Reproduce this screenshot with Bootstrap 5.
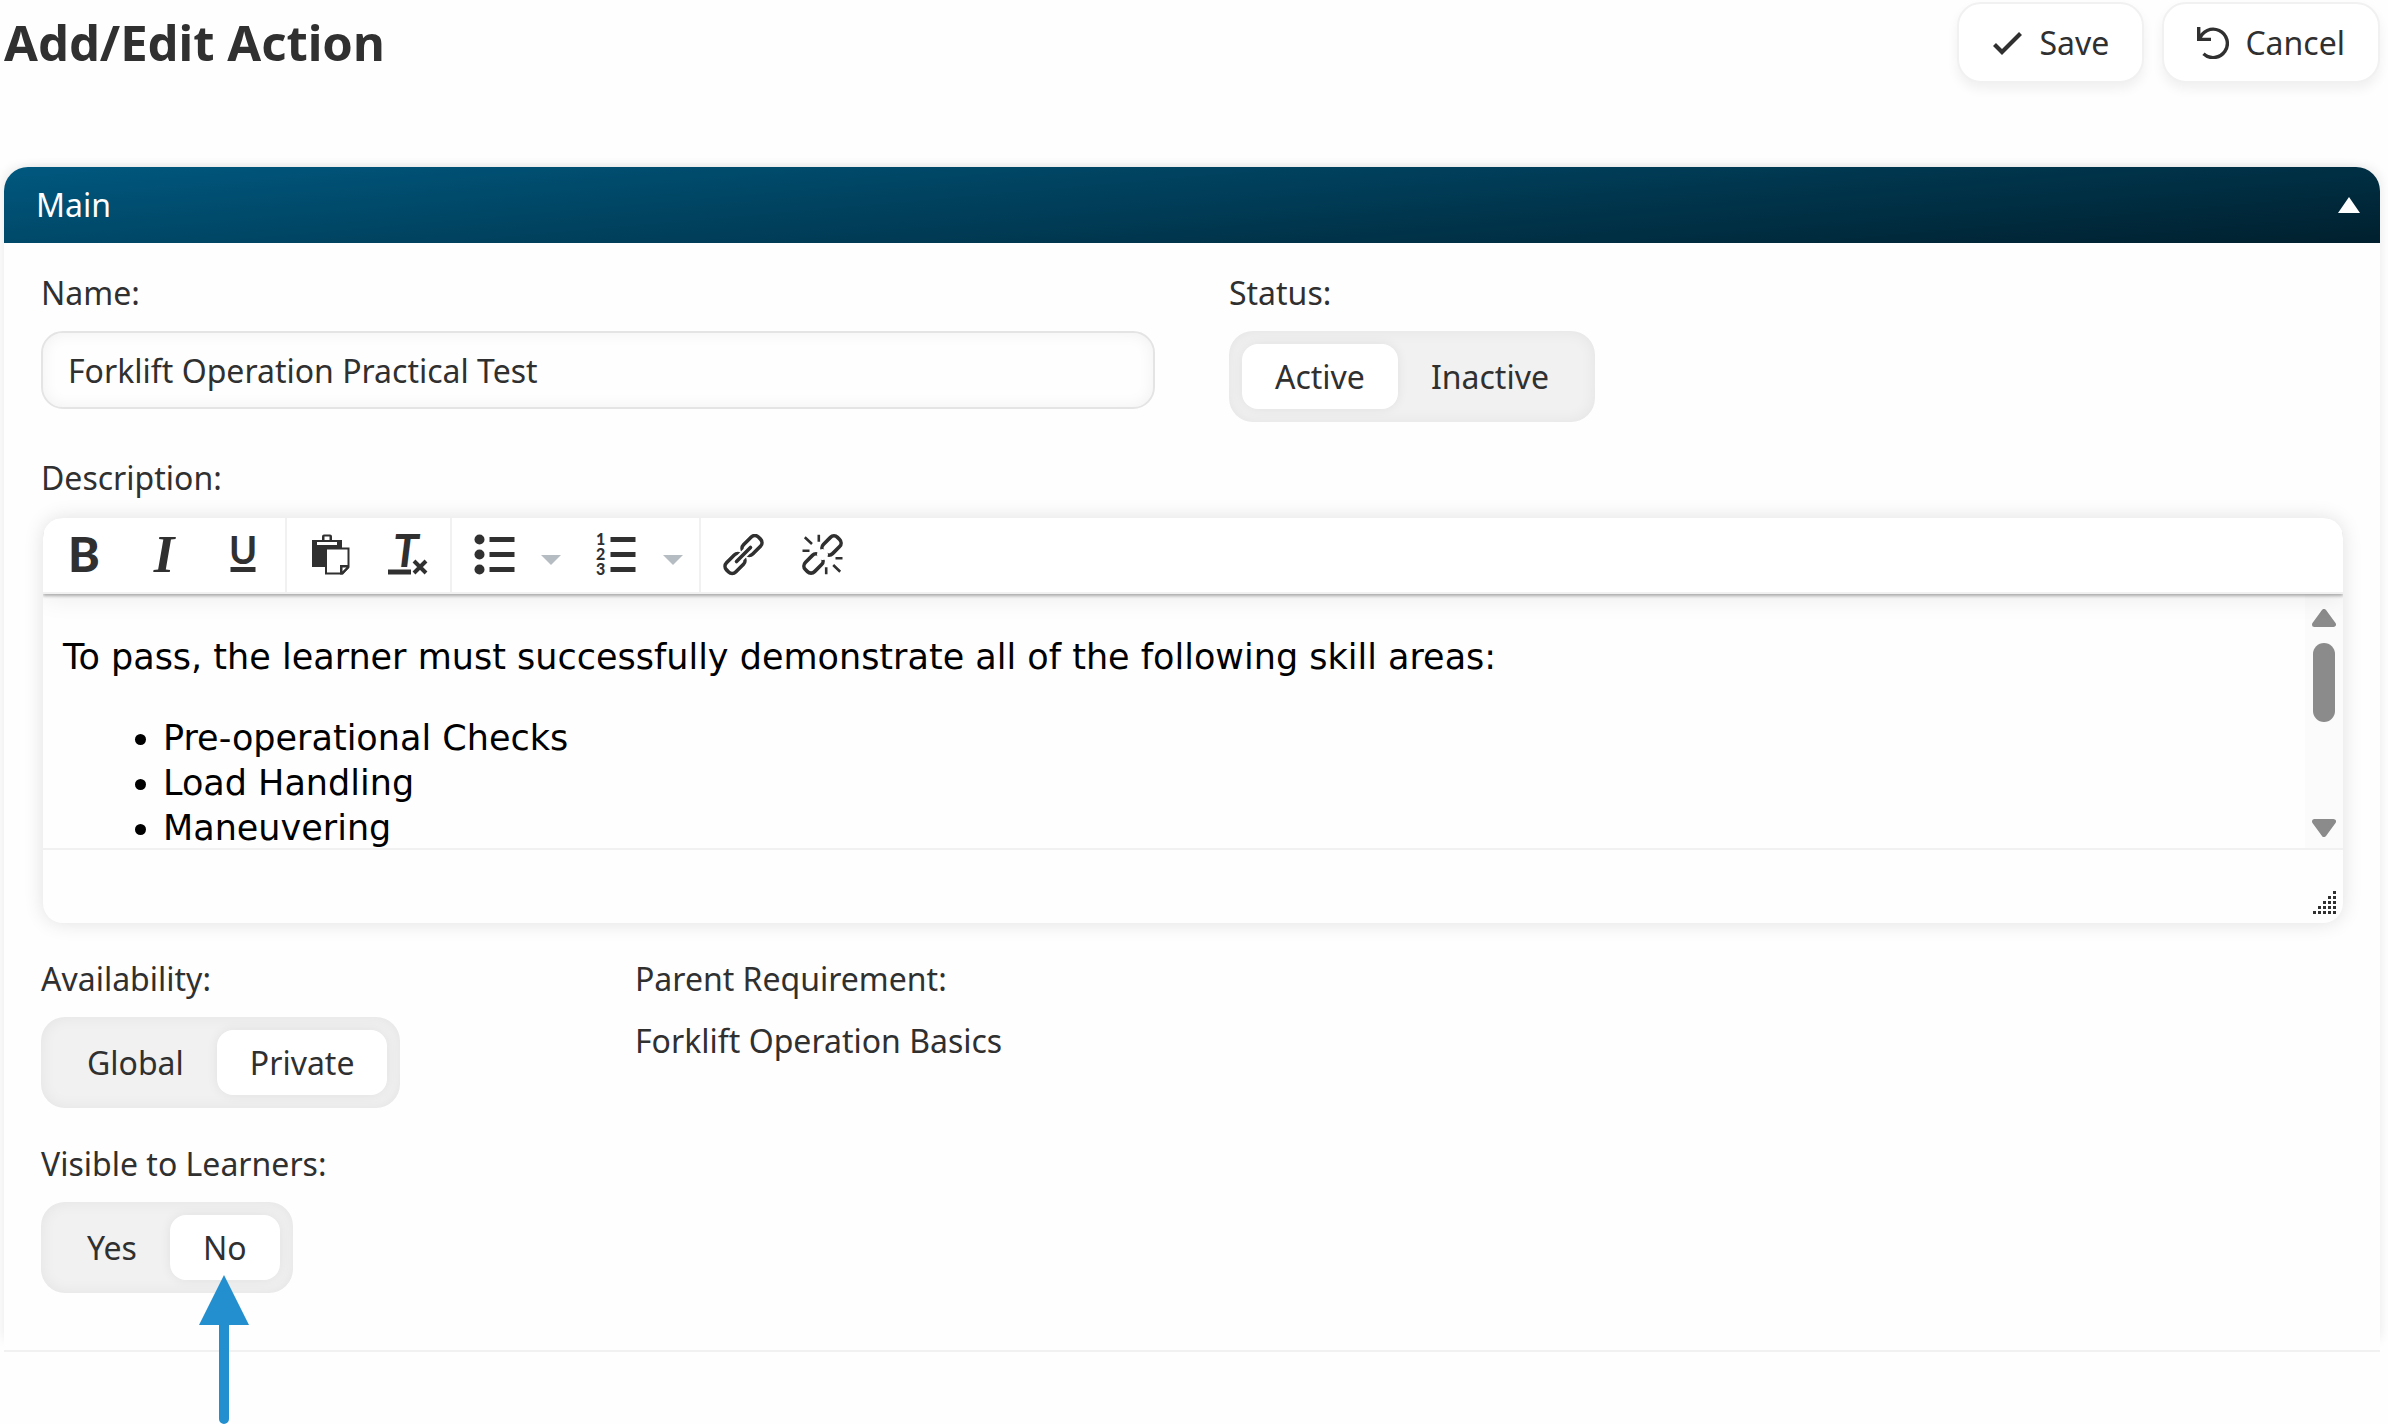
<!DOCTYPE html>
<html lang="en">
<head>
<meta charset="utf-8">
<meta name="viewport" content="width=device-width, initial-scale=1">
<title>Add/Edit Action</title>
<link href="https://cdn.jsdelivr.net/npm/bootstrap@5.3.0/dist/css/bootstrap.min.css" rel="stylesheet">
<style>
  body { font-family: "Noto Sans", sans-serif; font-size: 32px; line-height: 40px; color: #303030; background: #fefefe; }
  .page-head { padding: 2px 8px 0 4px; }
  .page-title { font-size: 49px; line-height: 80px; font-weight: 700; }
  .btn-tool { --bs-btn-color: #303030; --bs-btn-bg: #fff; --bs-btn-border-color: #f1f1f1; --bs-btn-border-width: 2px; --bs-btn-border-radius: 24px;
    --bs-btn-padding-x: 33px; --bs-btn-padding-y: 0; --bs-btn-font-size: 32px; --bs-btn-line-height: 77px;
    --bs-btn-hover-bg: #f6f6f6; --bs-btn-hover-border-color: #eaeaea; gap: 16px; box-shadow: 0 6px 12px rgba(0,0,0,.06); }
  .btn-bar { gap: 18px; }
  .panel-wrap { padding: 84px 8px 0 4px; }
  .panel { border-radius: 24px 24px 0 0; border-bottom: 2px solid #f1f1f1; background: #fefefe;
    box-shadow: -7px -6px 12px -7px rgba(0,0,0,.09), 7px -6px 12px -7px rgba(0,0,0,.09); }
  .panel-head { height: 76px; padding: 0 20px 0 32px; border-radius: 24px 24px 0 0; color: #fff; background: linear-gradient(175deg, #00587f, #00202e); }
  .panel-toggle { color: #fff; line-height: 0; }
  .panel-body { padding: 30px 37px 57px; }
  .panel-body .row { --bs-gutter-x: 74px; --bs-gutter-y: 0; }
  .rows { gap: 36px; }
  .field-label { display: block; margin-bottom: 18px; }
  .field-label-editor { margin-bottom: 20px; }
  .field-value { line-height: 48px; }
  .text-input { height: 78px; padding: 0 25px; font-size: 32px; color: #303030; border: 2px solid #e4e4e4; border-radius: 22px; background: #fefefe; box-shadow: inset 0 0 16px rgba(0,0,0,.06); }
  .switcher { padding: 13px; border-radius: 24px; background: #f1f1f1; box-shadow: inset 0 0 16px rgba(0,0,0,.06); }
  .switcher .btn { --bs-btn-font-size: 32px; --bs-btn-line-height: 65px; --bs-btn-padding-x: 33px; --bs-btn-padding-y: 0; --bs-btn-border-width: 0; --bs-btn-border-radius: 16px;
    --bs-btn-color: #303030; --bs-btn-active-color: #303030; --bs-btn-active-bg: #fff; }
  .switcher .btn-check:checked + .btn { box-shadow: 0 0 12px rgba(0,0,0,.07); }
  .editor { margin-left: 2px; border-radius: 20px; background: #fefefe; box-shadow: 0 0 20px rgba(0,0,0,.12); overflow: hidden; }
  .editor-tools { height: 76px; border-bottom: 2px solid #f1f1f1; background: #fff; position: relative; box-shadow: 0 2px 3px rgba(0,0,0,.3), 0 4px 26px rgba(0,0,0,.08); }
  .tool-group { padding: 0 2px 0 3px; }
  .tool-group + .tool-group { border-left: 2px solid #f1f1f1; }
  .tool { width: 79px; padding: 0; border: 0; border-radius: 0; color: #303030; line-height: 0; }
  .tool-caret { width: 34px; margin-right: 9px; }
  .tool-group-lists { padding-right: 0; }
  .editor-main { height: 254px; }
  .editor-text { padding: 41px 20px 0; overflow: hidden; font-family: Verdana, "DejaVu Sans", sans-serif; font-size: 35px; line-height: 45px; color: #000; outline: 0; }
  .editor-text p { margin-bottom: 36px; }
  .editor-text ul { padding-left: 100px; }
  .scroll-track { width: 38px; padding: 15px 0 11px; background: #fbfbfb; }
  .scroll-thumb { width: 22px; height: 79px; margin-top: 16px; border-radius: 11px; background: #8b8b8b; }
  .editor-foot { height: 75px; padding: 0 7px 9px 0; border-top: 2px solid #f1f1f1; }
  .pointer-arrow { position: absolute; left: 50%; top: 60px; margin-left: -26px; pointer-events: none; }
</style>
<script src="https://cdn.jsdelivr.net/npm/bootstrap@5.3.0/dist/js/bootstrap.bundle.min.js"></script>
</head>
<body class="min-vh-100">
<header class="page-head d-flex justify-content-between align-items-start">
  <h1 class="page-title mb-0">Add/Edit Action</h1>
  <div class="btn-bar d-flex">
    <button type="submit" form="actionForm" class="btn btn-tool d-flex align-items-center">
      <svg width="32" height="32" fill="none" stroke="#303030" aria-hidden="true"><path d="M2.500 17.500L10 25L28.500 6.500" stroke-width="4.200"/></svg>
      Save
    </button>
    <button type="button" class="btn btn-tool d-flex align-items-center">
      <svg width="32" height="32" fill="none" stroke="#303030" stroke-width="3.400" aria-hidden="true"><path d="M1.700 0V12.400H14M2.500 12.400A14.200 14.200 0 1 1 6.500 26.800"/></svg>
      Cancel
    </button>
  </div>
</header>

<main class="panel-wrap">
  <section class="panel">
    <div class="panel-head d-flex justify-content-between align-items-center">
      <span>Main</span>
      <button type="button" class="panel-toggle btn p-0 border-0" data-bs-toggle="collapse" data-bs-target="#mainBody" aria-label="Collapse Main">
        <svg width="22" height="16" aria-hidden="true"><path d="M11 0L22 16H0z" fill="#fff"/></svg>
      </button>
    </div>
    <div id="mainBody" class="collapse show">
      <form id="actionForm" class="panel-body rows d-flex flex-column">
        <div class="row">
          <div class="col-6">
            <label class="field-label" for="actionName">Name:</label>
            <input id="actionName" type="text" class="form-control text-input" value="Forklift Operation Practical Test">
          </div>
          <div class="col-6">
            <span class="field-label" id="statusLabel">Status:</span>
            <div class="switcher d-inline-flex align-top" role="group" aria-labelledby="statusLabel">
              <input type="radio" class="btn-check" name="status" id="stActive" checked><label class="btn" for="stActive">Active</label>
              <input type="radio" class="btn-check" name="status" id="stInactive"><label class="btn" for="stInactive">Inactive</label>
            </div>
          </div>
        </div>

        <div>
          <span class="field-label field-label-editor" id="descLabel">Description:</span>
          <div class="editor">
            <div class="editor-tools d-flex" role="toolbar" aria-label="Formatting">
              <div class="tool-group d-flex">
                <button type="button" class="btn tool" aria-label="Bold"><svg width="60" height="66" viewBox="-9 -12 60 66"><text x="19" y="38" text-anchor="middle" font-family="Lato, sans-serif" font-weight="900" font-size="48" fill="#303030">B</text></svg></button>
                <button type="button" class="btn tool" aria-label="Italic"><svg width="60" height="66" viewBox="-9 -12 60 66"><text x="20" y="38" text-anchor="middle" font-family="Liberation Serif, serif" font-weight="700" font-style="italic" font-size="53" fill="#303030">I</text></svg></button>
                <button type="button" class="btn tool" aria-label="Underline"><svg width="60" height="66" viewBox="-9 -12 60 66"><text x="20" y="30" text-anchor="middle" font-family="Lato, sans-serif" font-weight="700" font-size="38" fill="#303030">U</text><path d="M7.500 33h25v5h-25z" fill="#303030"/></svg></button>
              </div>
              <div class="tool-group d-flex">
                <button type="button" class="btn tool" aria-label="Paste"><svg width="42" height="42"><path fill="#303030" fill-rule="evenodd" d="M3 6H13V2.500Q13 .5 15 .5H21Q23 .5 23 2.500V6H33V33H3zM15.500 2.500V6H20.500V2.500zM8 8V11H28V8z"/><path fill="#fff" stroke="#303030" stroke-width="2" d="M17 14.500H39.500V33L33 39.500H17z"/><path fill="#303030" d="M31 31H40V34L34 40.500H31zM33.500 33.500V37.500L37.500 33.500z" fill-rule="evenodd"/></svg></button>
                <button type="button" class="btn tool" aria-label="Remove format"><svg width="60" height="66" viewBox="-9 -12 60 66"><text x="5" y="33" font-family="Lato, sans-serif" font-weight="700" font-style="italic" font-size="46" fill="#303030">T</text><path d="M0 35.500H23V40.500H0z" fill="#303030"/><path d="M26 27L38 39M38 27L26 39" stroke="#303030" stroke-width="4"/></svg></button>
              </div>
              <div class="tool-group tool-group-lists d-flex">
                <button type="button" class="btn tool" aria-label="Bulleted list"><svg width="42" height="42" fill="#303030"><circle cx="5.500" cy="5.500" r="5"/><circle cx="5.500" cy="20.500" r="5"/><circle cx="5.500" cy="35.500" r="5"/><path d="M15.500 3h25v5h-25zM15.500 18h25v5h-25zM15.500 33h25v5h-25z"/></svg></button>
                <button type="button" class="btn tool tool-caret" aria-label="Bulleted list styles"><svg width="20" height="30"><path d="M0 15H20L10 25z" fill="#b6bdc2"/></svg></button>
                <button type="button" class="btn tool" aria-label="Numbered list"><svg width="60" height="66" viewBox="-9 -12 60 66" fill="#303030"><g font-family="Lato, sans-serif" font-weight="900" font-size="16"><text x="0" y="11">1</text><text x="0" y="26">2</text><text x="0" y="41">3</text></g><path d="M14.500 3h25v5h-25zM14.500 18h25v5h-25zM14.500 33h25v5h-25z"/></svg></button>
                <button type="button" class="btn tool tool-caret" aria-label="Numbered list styles"><svg width="20" height="30"><path d="M0 15H20L10 25z" fill="#b6bdc2"/></svg></button>
              </div>
              <div class="tool-group d-flex">
                <button type="button" class="btn tool" aria-label="Link"><svg width="42" height="42" fill="none" stroke="#303030" stroke-width="3.600"><rect x="18.500" y="5" width="21" height="13" rx="5" transform="rotate(-45 29 11.500)"/><rect x="1.500" y="23" width="21" height="13" rx="5" transform="rotate(-45 12 29.500)"/><path d="M14.500 26.500L26.500 14.500" stroke="#fff" stroke-width="8"/><path d="M13.500 27.500L27.500 13.500" stroke-linecap="round"/></svg></button>
                <button type="button" class="btn tool" aria-label="Unlink"><svg width="42" height="42" fill="none" stroke="#303030" stroke-width="3.600"><rect x="19.500" y="5" width="20" height="13" rx="5" transform="rotate(-45 29.500 11.500)"/><rect x="1.500" y="23" width="20" height="13" rx="5" transform="rotate(-45 11.500 29.500)"/><circle cx="20.500" cy="20.500" r="5.500" fill="#fff" stroke="none"/><path stroke-width="2.600" d="M2.800 3.300L10 10M16.800 .7v7M.5 16.700h7M33.500 24.300h7M24.200 33.300v7M31.200 31l7 6.700"/></svg></button>
              </div>
            </div>
            <div class="editor-main d-flex">
              <div class="editor-text flex-grow-1" contenteditable="true" role="textbox" aria-multiline="true" aria-labelledby="descLabel" spellcheck="false">
                <p>To pass, the learner must successfully demonstrate all of the following skill areas:</p>
                <ul class="mb-0"><li>Pre-operational Checks</li><li>Load Handling</li><li>Maneuvering</li></ul>
              </div>
              <div class="scroll-track d-flex flex-column align-items-center" aria-hidden="true">
                <svg width="24" height="18"><path d="M12 2.500L21.500 15.500H2.500z" fill="#8b8b8b" stroke="#8b8b8b" stroke-width="5" stroke-linejoin="round"/></svg>
                <div class="scroll-thumb"></div>
                <svg class="mt-auto" width="24" height="18"><path d="M12 15.500L21.500 2.500H2.500z" fill="#8b8b8b" stroke="#8b8b8b" stroke-width="5" stroke-linejoin="round"/></svg>
              </div>
            </div>
            <div class="editor-foot d-flex justify-content-end align-items-end">
              <svg width="23" height="23" stroke="#303030" stroke-width="3" stroke-dasharray="3 2" aria-hidden="true"><path d="M0 21.500H23M5 16.500H23M10 11.500H23M15 6.500H23M20 1.500H23"/></svg>
            </div>
          </div>
        </div>

        <div class="row">
          <div class="col-3">
            <span class="field-label" id="availLabel">Availability:</span>
            <div class="switcher d-inline-flex align-top" role="group" aria-labelledby="availLabel">
              <input type="radio" class="btn-check" name="avail" id="avGlobal"><label class="btn" for="avGlobal">Global</label>
              <input type="radio" class="btn-check" name="avail" id="avPrivate" checked><label class="btn" for="avPrivate">Private</label>
            </div>
          </div>
          <div class="col-3">
            <span class="field-label">Parent Requirement:</span>
            <div class="field-value">Forklift Operation Basics</div>
          </div>
        </div>

        <div>
          <span class="field-label" id="visLabel">Visible to Learners:</span>
          <div class="switcher d-inline-flex align-top" role="group" aria-labelledby="visLabel">
            <input type="radio" class="btn-check" name="visible" id="visYes"><label class="btn" for="visYes">Yes</label>
            <input type="radio" class="btn-check" name="visible" id="visNo" checked><label class="btn position-relative" for="visNo">No<svg class="pointer-arrow" width="50" height="149" aria-hidden="true"><path d="M25 0L50 50H30V144a5 5 0 0 1-10 0V50H0z" fill="#248fce"/></svg></label>
          </div>
        </div>
      </form>
    </div>
  </section>
</main>
</body>
</html>
